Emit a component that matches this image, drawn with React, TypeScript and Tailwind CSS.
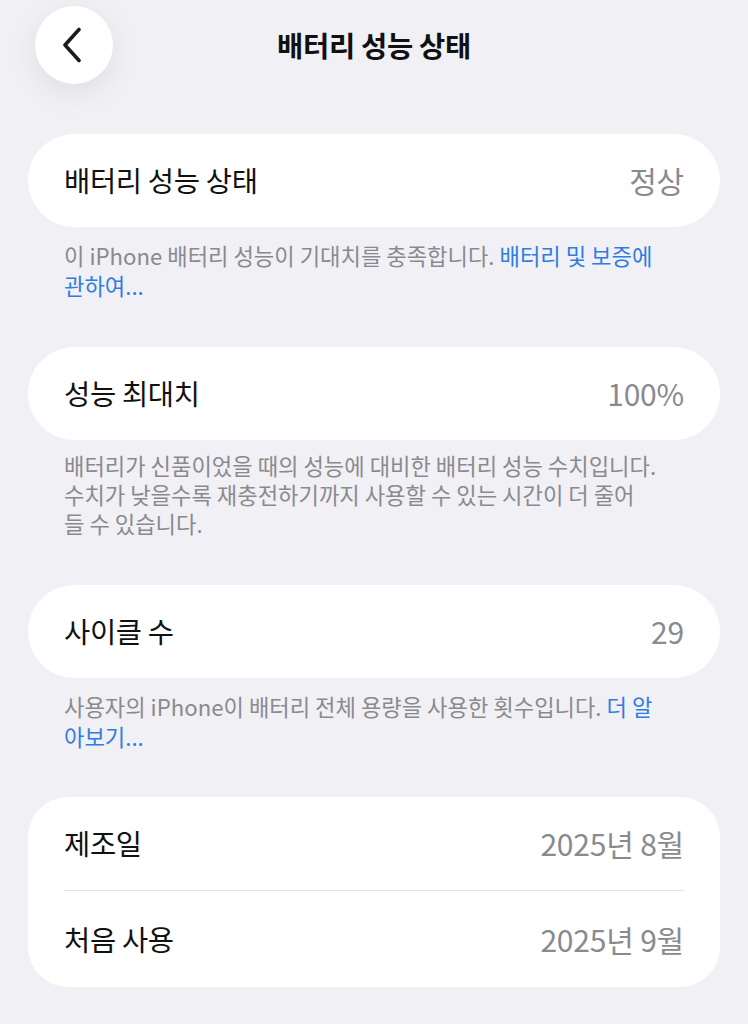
import React from "react";

const font = { fontFamily: '"Noto Sans CJK KR", "Noto Sans", sans-serif' };

function Row({ label, value, h = "h-[93px]" }: { label: string; value: string; h?: string }) {
  return (
    <div className={`flex items-center justify-between ${h} px-[36px]`}>
      <span className="text-[28.5px] text-[#111111] tracking-[-0.3px]">{label}</span>
      <span className="text-[30px] text-[#8a8a8e] tracking-[-0.2px]">{value}</span>
    </div>
  );
}

export default function App() {
  return (
    <div className="min-h-[1024px] w-[748px] bg-[#f0f0f5] overflow-hidden" style={font}>
      <div className="grid grid-cols-[1fr_auto_1fr] items-center pt-[6px] px-[35px] h-[84px]">
        <div>
          <button className="w-[78px] h-[78px] rounded-full bg-white flex items-center justify-center shadow-[0_8px_30px_rgba(0,0,0,0.08)]">
            <svg width="22" height="36" viewBox="0 0 22 36" className="-ml-[4px]">
              <path d="M18 2.5 L4 18 L18 33.5" fill="none" stroke="#1c1c1e" strokeWidth="3.6" strokeLinecap="round" strokeLinejoin="round" />
            </svg>
          </button>
        </div>
        <h1 className="text-[28.5px] font-semibold text-[#111111] tracking-[-0.3px]">배터리 성능 상태</h1>
        <div />
      </div>

      <div className="mt-[50px] mx-[28px] bg-white rounded-full">
        <Row label="배터리 성능 상태" value="정상" />
      </div>
      <p className="mt-[13px] px-[64px] text-[22.2px] leading-[30px] text-[#8a8a8e] whitespace-nowrap">
        이 iPhone 배터리 성능이 기대치를 충족합니다. <span className="text-[#2f7de1]">배터리 및 보증에</span>
        <br />
        <span className="text-[#2f7de1]">관하여...</span>
      </p>

      <div className="mt-[47px] mx-[28px] bg-white rounded-full">
        <Row label="성능 최대치" value="100%" />
      </div>
      <p className="mt-[11px] px-[64px] text-[22.2px] leading-[29px] text-[#8a8a8e] whitespace-nowrap">
        배터리가 신품이었을 때의 성능에 대비한 배터리 성능 수치입니다.
        <br />
        수치가 낮을수록 재충전하기까지 사용할 수 있는 시간이 더 줄어
        <br />
        들 수 있습니다.
      </p>

      <div className="mt-[47px] mx-[28px] bg-white rounded-full">
        <Row label="사이클 수" value="29" />
      </div>
      <p className="mt-[13px] px-[64px] text-[22.2px] leading-[30px] text-[#8a8a8e] whitespace-nowrap">
        사용자의 iPhone이 배터리 전체 용량을 사용한 횟수입니다. <span className="text-[#2f7de1]">더 알</span>
        <br />
        <span className="text-[#2f7de1]">아보기...</span>
      </p>

      <div className="mt-[46px] mx-[28px] bg-white rounded-[40px]">
        <Row label="제조일" value="2025년 8월" />
        <div className="mx-[36px] h-px bg-[#e2e2e6]" />
        <Row label="처음 사용" value="2025년 9월" h="h-[96px]" />
      </div>
    </div>
  );
}
